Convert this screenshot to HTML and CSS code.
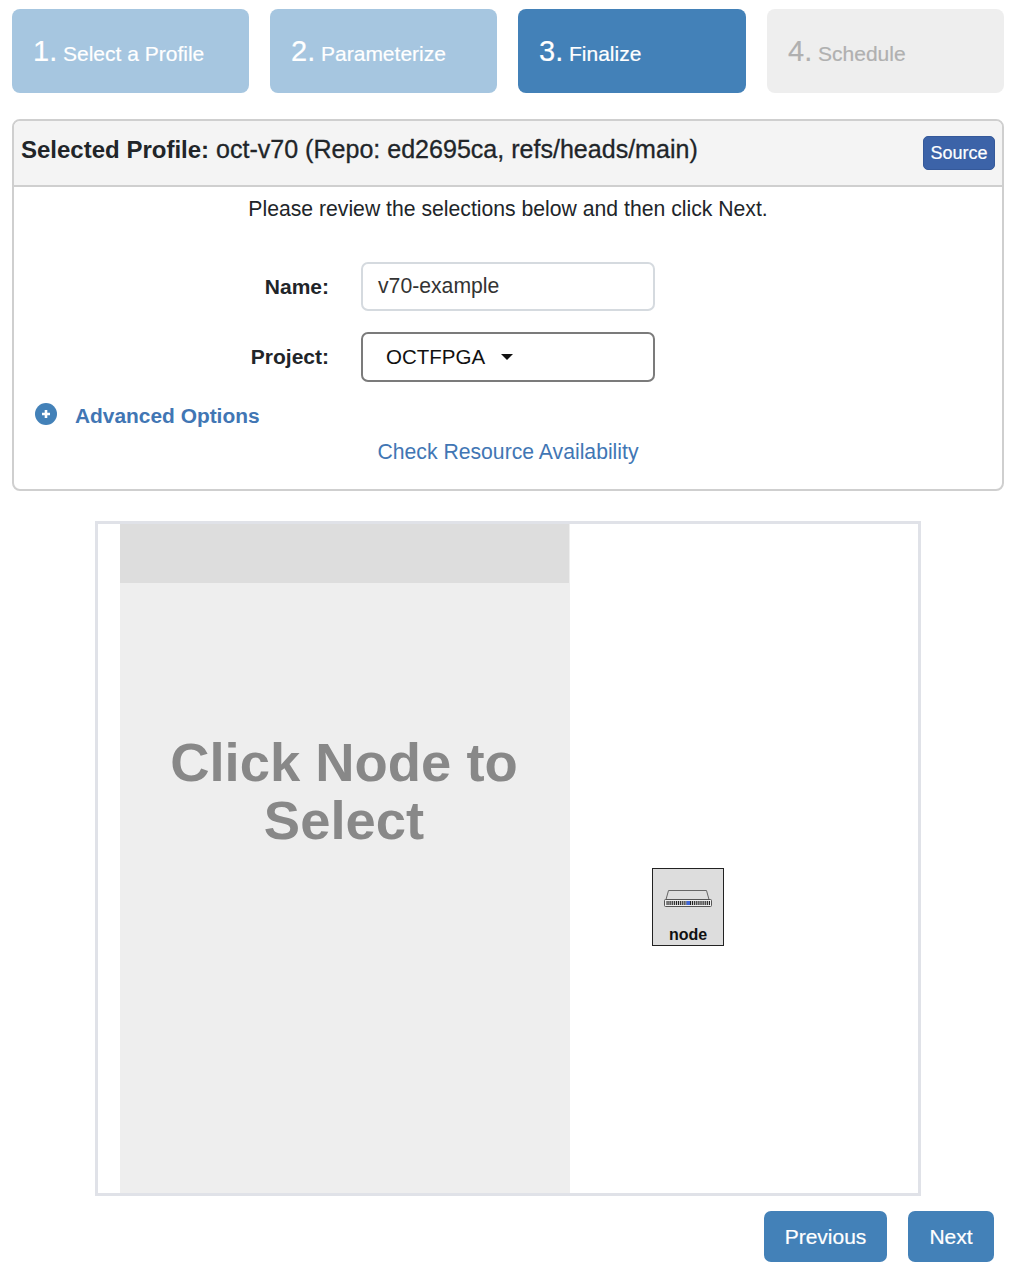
FILE: index.html
```html
<!DOCTYPE html>
<html lang="en">
<head>
    <meta charset="UTF-8">
    <meta name="viewport" content="width=device-width, initial-scale=1.0">
    <title>Start Experiment</title>
    <link rel="stylesheet" href="styles.css">
</head>
<body>
    <div class="steps">
        <div class="step done"><span class="num">1.</span> Select a Profile</div>
        <div class="step done"><span class="num">2.</span> Parameterize</div>
        <div class="step current"><span class="num">3.</span> Finalize</div>
        <div class="step todo"><span class="num">4.</span> Schedule</div>
    </div>

    <div class="panel">
        <div class="panel-head">
            <div class="panel-title"><strong>Selected Profile:</strong> oct-v70 (Repo: ed2695ca, refs/heads/main)</div>
            <a class="source-btn">Source</a>
        </div>
        <div class="panel-body">
            <p class="intro">Please review the selections below and then click Next.</p>
            <div class="form-row">
                <label class="form-label">Name:</label>
                <div class="input">v70-example</div>
            </div>
            <div class="form-row project-row">
                <label class="form-label">Project:</label>
                <div class="select">OCTFPGA <span class="caret"></span></div>
            </div>
            <div class="advanced">
                <svg class="plus-icon" width="22" height="22" viewBox="0 0 22 22">
                    <circle cx="11" cy="11" r="11" fill="#4381b8"/>
                    <path d="M11 7v8M7 11h8" stroke="#fff" stroke-width="2.6"/>
                </svg>
                <a class="advanced-link">Advanced Options</a>
            </div>
            <div class="check-link"><a>Check Resource Availability</a></div>
        </div>
    </div>

    <div class="topology">
        <div class="side">
            <div class="side-head"></div>
            <div class="side-body">Click Node to Select</div>
        </div>
        <div class="graph">
            <div class="node">
                <svg class="node-icon" width="50" height="20" viewBox="0 0 50 20">
                    <path d="M5.5 1.5h38l2.5 9h-43z" fill="#dedede" stroke="#666" stroke-width="1"/>
                    <rect x="1.5" y="10.5" width="47" height="7" rx="1" fill="#eee" stroke="#555" stroke-width="1"/>
                    <path d="M3.5 14h20M27 14h20" stroke="#222" stroke-width="4" stroke-dasharray="1.1 0.8"/>
                    <rect x="23.5" y="12" width="3.5" height="4" fill="#3f66d8"/>
                </svg>
                <div class="node-name">node</div>
            </div>
        </div>
    </div>

    <div class="actions">
        <a class="btn btn-prev">Previous</a>
        <a class="btn btn-next">Next</a>
    </div>
</body>
</html>
```

FILE: styles.css
```css
* {
    box-sizing: border-box;
}
body {
    font-family: "Liberation Sans", Arial, sans-serif;
    font-size: 21.2px;
    line-height: 1.5;
    color: #212529;
    margin: 0;
    padding: 9px 14px 16px 12px;
    background-color: #fff;
}
.steps {
    display: grid;
    grid-template-columns: 237px 227px 228px 237px;
    gap: 21px;
}
.step {
    height: 84px;
    padding-left: 21px;
    border-radius: 8px;
    font-size: 21px;
    line-height: 84px;
    color: #fff;
    -webkit-text-stroke: 0.2px;
}
.step .num {
    font-size: 29px;
}
.step.done {
    background-color: #a6c6e0;
}
.step.current {
    background-color: #4381b8;
}
.step.todo {
    background-color: #eee;
    color: #b0b0b0;
}
.panel {
    margin-top: 26px;
    height: 372px;
    border: 2px solid #cfcfcf;
    border-radius: 8px;
}
.panel-head {
    display: flex;
    justify-content: space-between;
    align-items: center;
    height: 66px;
    padding: 0 7px;
    background-color: #f4f4f4;
    border-bottom: 2px solid #cfcfcf;
    border-radius: 6px 6px 0 0;
}
.panel-title {
    font-size: 25.05px;
    margin-top: -6px;
    -webkit-text-stroke: 0.3px;
}
.panel-title strong {
    font-size: 24px;
    -webkit-text-stroke: 0;
}
.source-btn {
    width: 72px;
    height: 34px;
    margin-top: -1px;
    line-height: 33px;
    text-align: center;
    font-size: 18px;
    color: #fff;
    background-color: #3c63a8;
    border: 1px solid #35599a;
    border-radius: 5px;
    -webkit-text-stroke: 0.2px;
}
.panel-body {
    padding-top: 6px;
}
.intro {
    margin: 0;
    text-align: center;
}
.form-row {
    display: flex;
    align-items: center;
    margin-top: 37px;
}
.project-row {
    margin-top: 21px;
}
.form-label {
    width: 315px;
    text-align: right;
    font-size: 21px;
    font-weight: bold;
    margin-right: 32px;
}
.input, .select {
    width: 294px;
    background-color: #fff;
    border-radius: 7px;
}
.input {
    height: 49px;
    line-height: 43px;
    padding-left: 15px;
    border: 2px solid #d5dadf;
    color: #333;
}
.select {
    height: 50px;
    line-height: 45px;
    padding-left: 23px;
    border: 2px solid #7b7b7b;
    color: #111;
    font-size: 20.5px;
}
.caret {
    display: inline-block;
    margin-left: 11px;
    vertical-align: 4px;
    border-top: 6px solid #111;
    border-left: 6px solid transparent;
    border-right: 6px solid transparent;
}
.advanced {
    display: flex;
    align-items: center;
    margin: 18px 0 0 21px;
}
.plus-icon {
    margin-top: -2px;
}
.advanced-link {
    margin-left: 18px;
    font-weight: bold;
    font-size: 20.9px;
    color: #4176b4;
}
.check-link {
    margin-top: 5px;
    text-align: center;
    color: #4176b4;
}
.topology {
    display: flex;
    width: 826px;
    height: 675px;
    margin: 30px 0 0 83px;
    border: 3px solid #e0e2e8;
}
.side {
    display: flex;
    flex-direction: column;
    width: 450px;
    margin-left: 22px;
    background-color: #eee;
}
.side-head {
    height: 59px;
    margin-right: 1px;
    background-color: #ddd;
}
.side-body {
    flex: 1;
    padding: 151px 12px 0 10px;
    text-align: center;
    font-size: 54.4px;
    font-weight: bold;
    line-height: 58px;
    color: #888;
}
.graph {
    position: relative;
    flex: 1;
}
.node {
    position: absolute;
    left: 82px;
    top: 344px;
    width: 72px;
    height: 78px;
    padding-top: 20px;
    text-align: center;
    background-color: #ddd;
    border: 1px solid #222;
}
.node-icon {
    display: block;
    margin: 0 auto;
}
.node-name {
    margin-top: 16px;
    font-size: 16px;
    font-weight: bold;
    line-height: 20px;
    color: #111;
}
.actions {
    display: flex;
    justify-content: flex-end;
    gap: 21px;
    margin: 15px 10px 0 0;
}
.btn {
    height: 51px;
    line-height: 51px;
    text-align: center;
    font-size: 21px;
    color: #fff;
    background-color: #4381b8;
    border-radius: 7px;
    -webkit-text-stroke: 0.2px;
}
.btn-prev {
    width: 123px;
}
.btn-next {
    width: 86px;
}
```
